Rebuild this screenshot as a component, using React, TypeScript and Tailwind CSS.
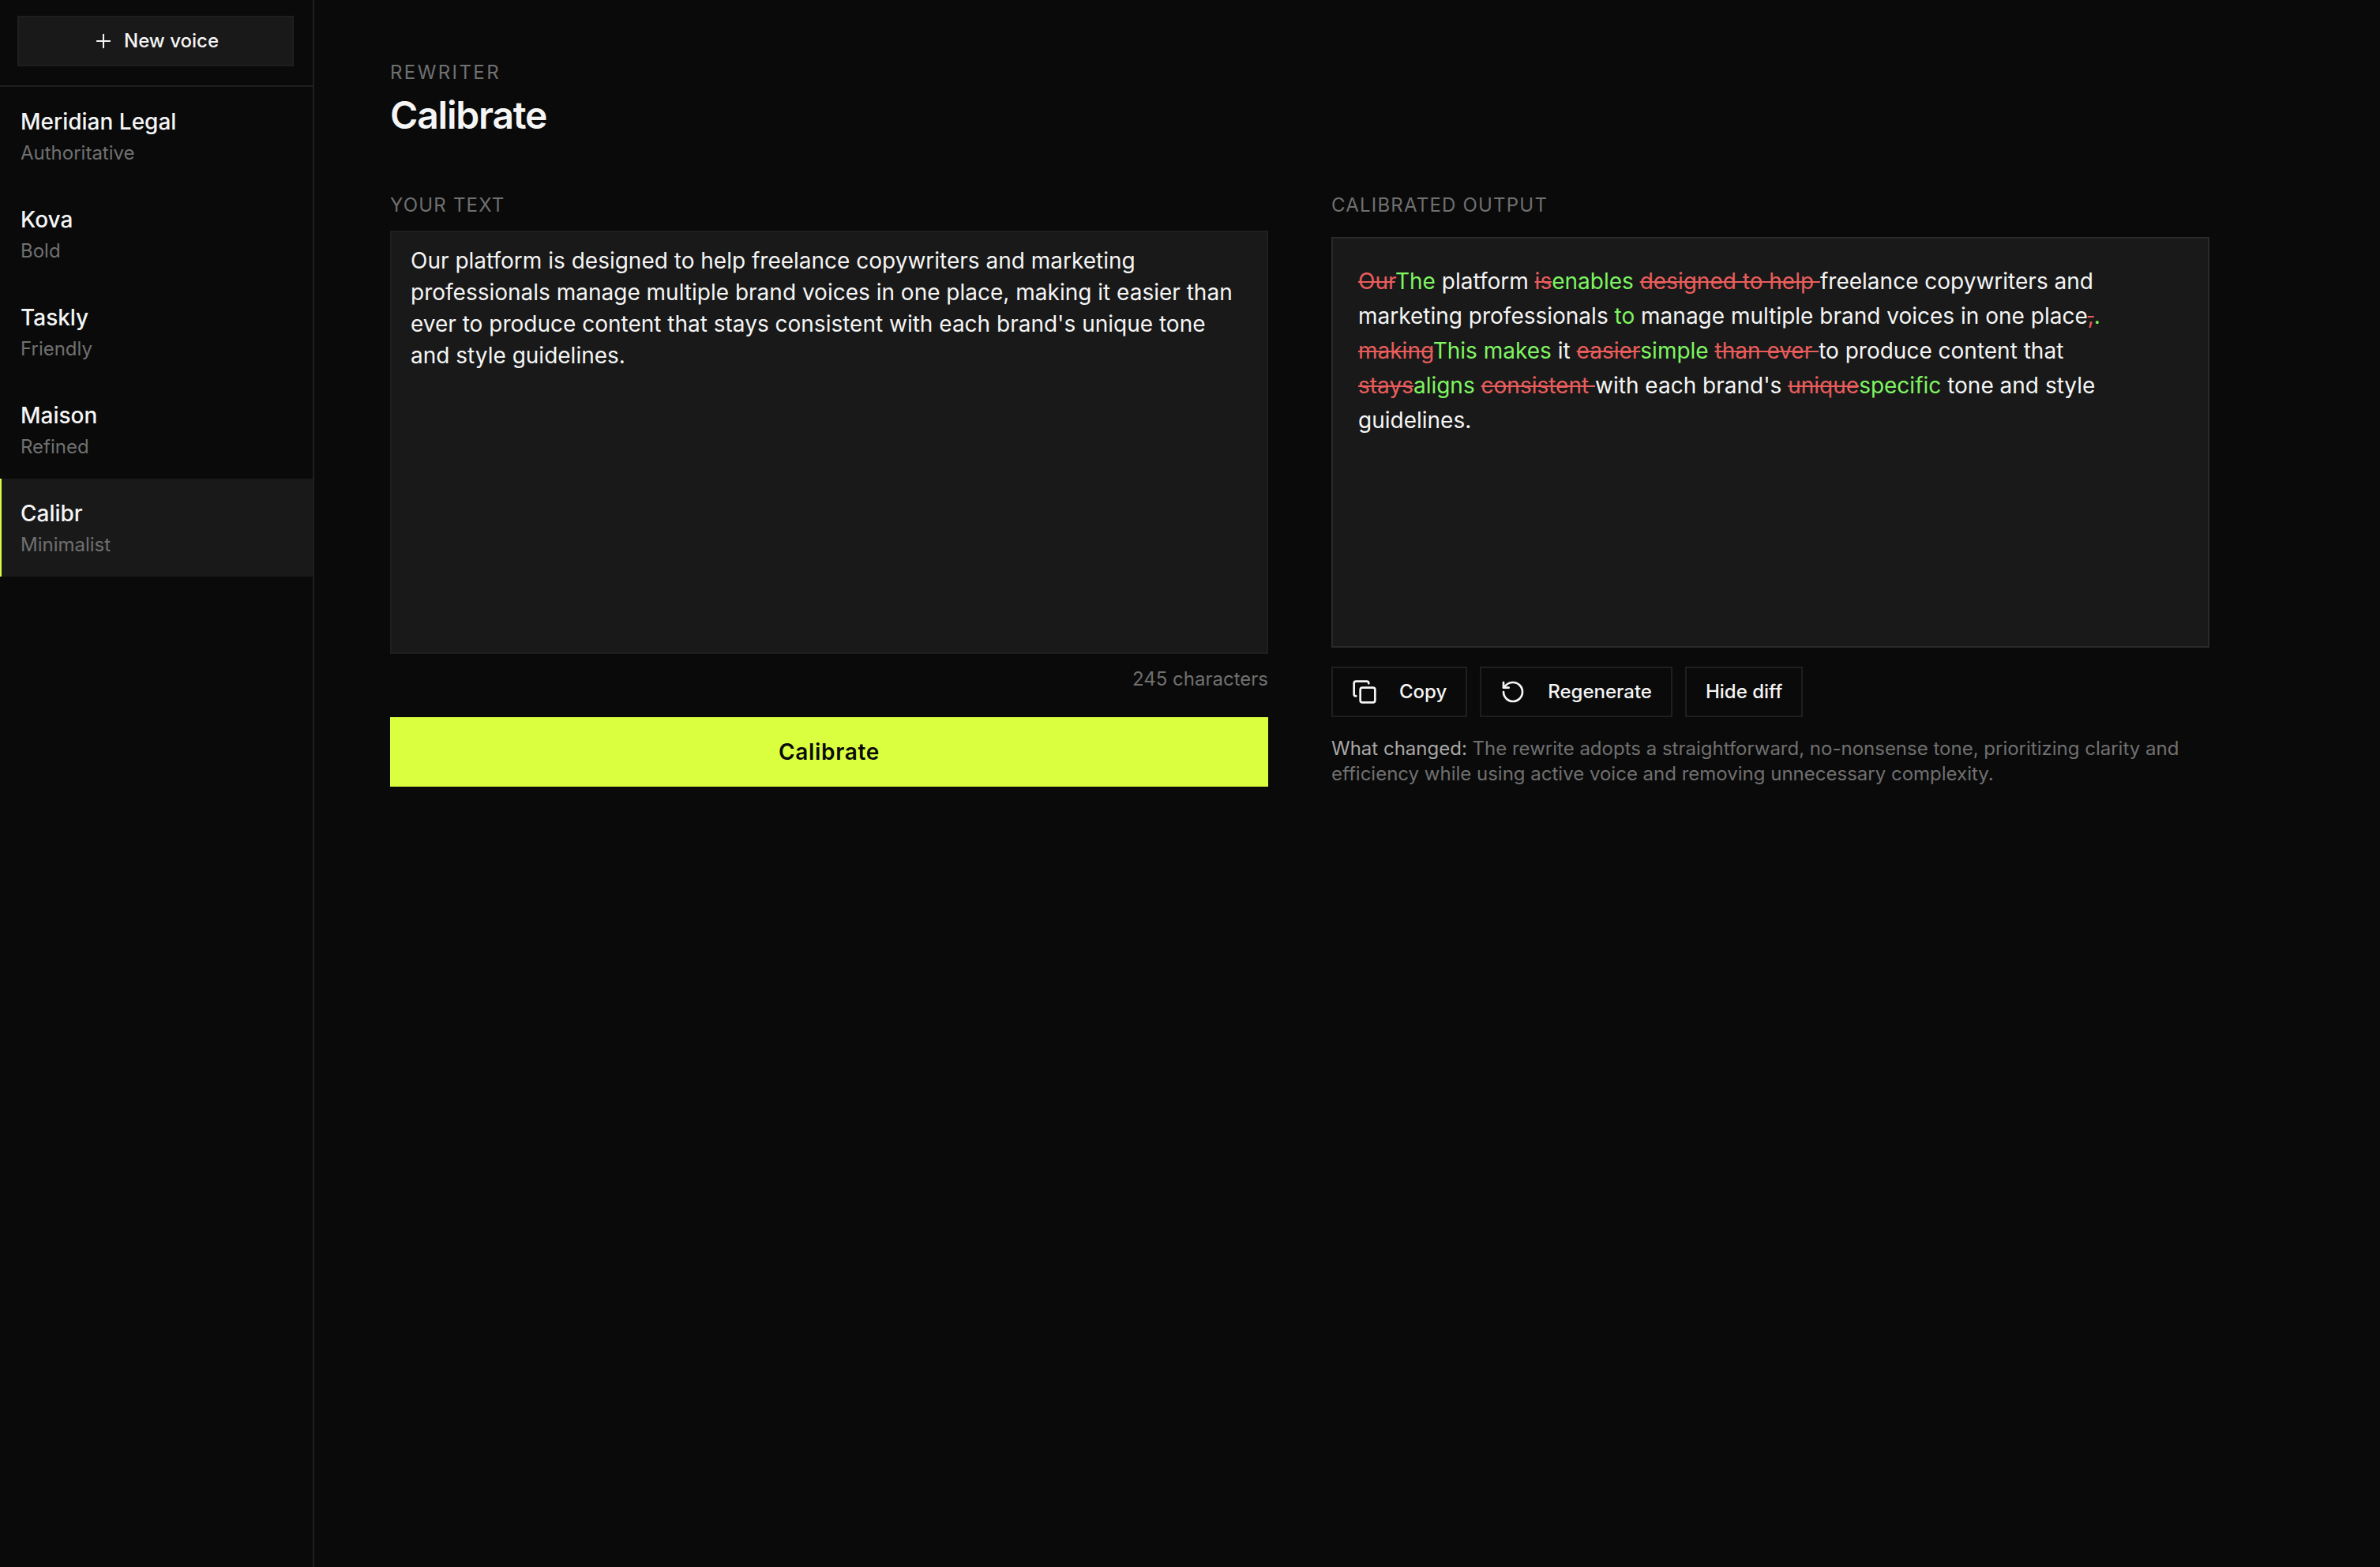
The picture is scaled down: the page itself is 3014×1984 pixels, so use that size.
import { useId, useState } from "react";
import { Copy, Plus, RotateCcw } from "lucide-react";

type Voice = { name: string; tone: string };

type Segment = { kind: "same" | "removed" | "added"; text: string };

const VOICES: Voice[] = [
  { name: "Meridian Legal", tone: "Authoritative" },
  { name: "Kova", tone: "Bold" },
  { name: "Taskly", tone: "Friendly" },
  { name: "Maison", tone: "Refined" },
  { name: "Calibr", tone: "Minimalist" },
];

const SOURCE =
  "Our platform is designed to help freelance copywriters and marketing professionals manage multiple brand voices in one place, making it easier than ever to produce content that stays consistent with each brand's unique tone and style guidelines.";

const DIFF: Segment[] = [
  { kind: "removed", text: "Our" },
  { kind: "added", text: "The" },
  { kind: "same", text: " platform " },
  { kind: "removed", text: "is" },
  { kind: "added", text: "enables" },
  { kind: "same", text: " " },
  { kind: "removed", text: "designed to help " },
  { kind: "same", text: "freelance copywriters and marketing professionals " },
  { kind: "added", text: "to" },
  { kind: "same", text: " manage multiple brand voices in one place" },
  { kind: "removed", text: "," },
  { kind: "added", text: "." },
  { kind: "same", text: " " },
  { kind: "removed", text: "making" },
  { kind: "added", text: "This makes" },
  { kind: "same", text: " it " },
  { kind: "removed", text: "easier" },
  { kind: "added", text: "simple" },
  { kind: "same", text: " " },
  { kind: "removed", text: "than ever " },
  { kind: "same", text: "to produce content that " },
  { kind: "removed", text: "stays" },
  { kind: "added", text: "aligns" },
  { kind: "same", text: " " },
  { kind: "removed", text: "consistent " },
  { kind: "same", text: "with each brand's " },
  { kind: "removed", text: "unique" },
  { kind: "added", text: "specific" },
  { kind: "same", text: " tone and style guidelines." },
];

function DiffText({ segments, showDiff }: { segments: Segment[]; showDiff: boolean }) {
  return (
    <p>
      {segments.map((s, i) => {
        if (s.kind === "same" || (!showDiff && s.kind === "added")) {
          return <span key={i}>{s.text}</span>;
        }
        if (s.kind === "added") {
          return (
            <ins key={i} className="text-[#7ff562] no-underline">
              {s.text}
            </ins>
          );
        }
        return showDiff ? (
          <del key={i} className="text-[#e85d5c] line-through decoration-2">
            {s.text}
          </del>
        ) : null;
      })}
    </p>
  );
}

const actionButton =
  "flex h-16 items-center gap-7 border-2 border-[#1f1f1f] px-6 text-[24px] font-medium";

export default function App() {
  const [active, setActive] = useState("Calibr");
  const [text, setText] = useState(SOURCE);
  const [showDiff, setShowDiff] = useState(true);
  const inputId = useId();

  return (
    <div className="flex min-h-screen bg-[#0a0a0a] font-[Inter,sans-serif] text-[#f5f5f5]">
      {/* Sidebar */}
      <aside className="w-[398px] shrink-0 border-r-2 border-[#1f1f1f]">
        <div className="border-b-2 border-[#1f1f1f] pt-5 pr-6 pb-6 pl-[22px]">
          <button
            type="button"
            className="flex h-16 w-full items-center justify-center gap-3 border-2 border-[#1f1f1f] bg-[#191919] text-[24px] font-medium"
          >
            <Plus className="size-7" strokeWidth={1.75} />
            New voice
          </button>
        </div>
        <nav>
          {VOICES.map((v) => (
            <button
              key={v.name}
              type="button"
              onClick={() => setActive(v.name)}
              className={`block h-[124px] w-full border-l-2 px-6 pt-1 text-left ${
                v.name === active ? "border-[#d9ff3f] bg-[#191919]" : "border-transparent"
              }`}
            >
              <span className="block text-[28px] leading-10 font-medium">{v.name}</span>
              <span className="block text-[24px] leading-10 text-[#707070]">{v.tone}</span>
            </button>
          ))}
        </nav>
      </aside>

      {/* Rewriter */}
      <main className="min-w-0 flex-1 px-24 pt-[76px]">
        <div className="max-w-[2304px]">
          <p className="text-[24px] leading-8 tracking-widest text-[#707070]">REWRITER</p>
          <h1 className="mt-2 text-[48px] leading-[60px] font-semibold tracking-tight">
            Calibrate
          </h1>

          <div className="mt-[68px] grid grid-cols-2 gap-20">
            <section>
              <label
                htmlFor={inputId}
                className="block text-[24px] leading-8 tracking-wider text-[#707070]"
              >
                YOUR TEXT
              </label>
              <textarea
                id={inputId}
                value={text}
                spellCheck={false}
                onChange={(e) => setText(e.target.value)}
                className="mt-4 block h-[536px] w-full resize-none border-2 border-[#1f1f1f] bg-[#191919] px-6 py-4 text-[28px] leading-10 outline-none"
              />
              <p className="mt-4 text-right text-[24px] leading-8 text-[#707070]">
                {text.length} characters
              </p>
              <button
                type="button"
                className="mt-8 block h-[88px] w-full bg-[#d9ff3f] text-[28px] font-semibold tracking-wide text-[#0a0a0a]"
              >
                Calibrate
              </button>
            </section>

            <section>
              <h2 className="text-[24px] leading-8 tracking-wider text-[#707070]">
                CALIBRATED OUTPUT
              </h2>
              <div className="mt-6 min-h-[520px] border-2 border-[#2a2a2a] bg-[#191919] px-8 py-8 text-[28px] leading-[44px]">
                <DiffText segments={DIFF} showDiff={showDiff} />
              </div>
              <div className="mt-6 flex gap-4">
                <button type="button" className={actionButton}>
                  <Copy className="size-8" strokeWidth={2} />
                  Copy
                </button>
                <button type="button" className={actionButton}>
                  <RotateCcw className="size-8" strokeWidth={2} />
                  Regenerate
                </button>
                <button
                  type="button"
                  className={actionButton}
                  onClick={() => setShowDiff(!showDiff)}
                >
                  {showDiff ? "Hide diff" : "Show diff"}
                </button>
              </div>
              <p className="mt-6 text-[24px] leading-8 text-[#707070]">
                <strong className="font-normal text-[#a8a8a8]">What changed:</strong> The rewrite
                adopts a straightforward, no-nonsense tone, prioritizing clarity and efficiency
                while using active voice and removing unnecessary complexity.
              </p>
            </section>
          </div>
        </div>
      </main>
    </div>
  );
}
